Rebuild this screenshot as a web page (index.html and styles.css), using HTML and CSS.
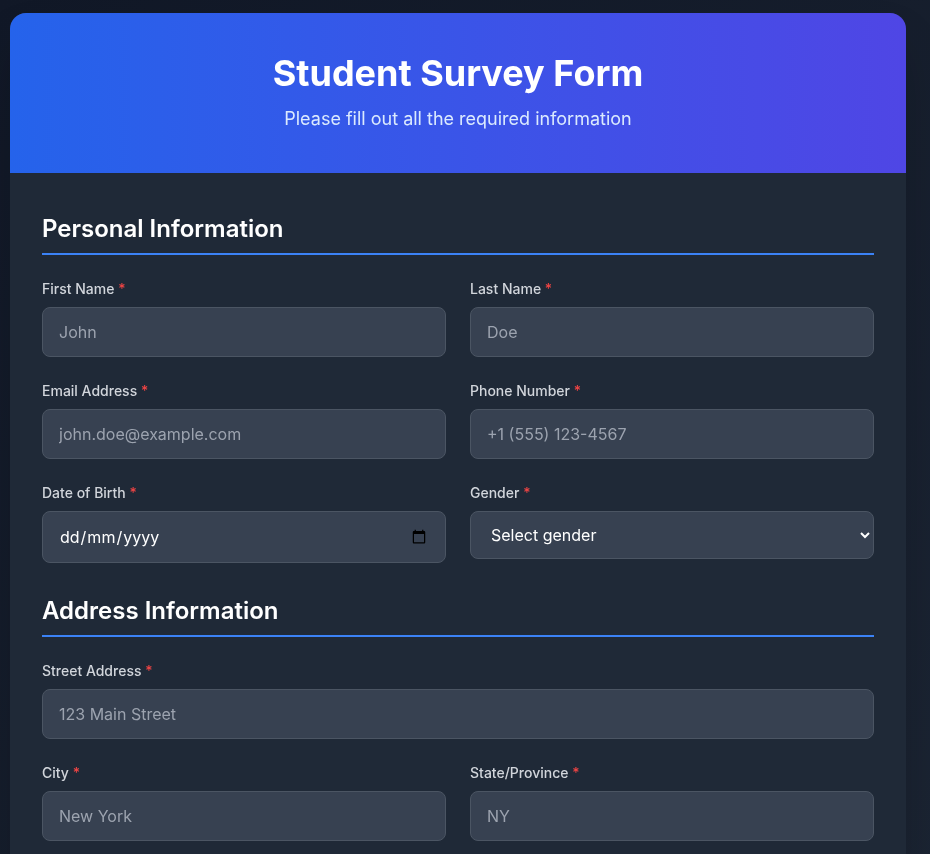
FILE: index.html
```html
<!DOCTYPE html>
<html lang="en-GB">
<head>
    <meta charset="UTF-8">
    <meta name="viewport" content="width=device-width, initial-scale=1.0">
    <title>Student Survey Form</title>
    <link rel="stylesheet" href="styles.css">
</head>
<body>
    <div class="container">
        <header class="form-header">
            <h1>Student Survey Form</h1>
            <p>Please fill out all the required information</p>
        </header>

        <form class="form-body">
            <section class="form-section">
                <h2>Personal Information</h2>
                <div class="form-grid">
                    <div class="form-group">
                        <label for="firstName">First Name <span class="required">*</span></label>
                        <input type="text" id="firstName" placeholder="John">
                    </div>
                    <div class="form-group">
                        <label for="lastName">Last Name <span class="required">*</span></label>
                        <input type="text" id="lastName" placeholder="Doe">
                    </div>
                    <div class="form-group">
                        <label for="email">Email Address <span class="required">*</span></label>
                        <input type="email" id="email" placeholder="john.doe@example.com">
                    </div>
                    <div class="form-group">
                        <label for="phone">Phone Number <span class="required">*</span></label>
                        <input type="tel" id="phone" placeholder="+1 (555) 123-4567">
                    </div>
                    <div class="form-group">
                        <label for="dob">Date of Birth <span class="required">*</span></label>
                        <div class="date-field">
                            <input type="date" id="dob">
                            <span class="date-mask"><span class="date-part">dd</span>/<span class="date-part">mm</span>/<span class="date-part">yyyy</span></span>
                        </div>
                    </div>
                    <div class="form-group">
                        <label for="gender">Gender <span class="required">*</span></label>
                        <select id="gender">
                            <option value="">Select gender</option>
                            <option>Male</option>
                            <option>Female</option>
                            <option>Other</option>
                        </select>
                    </div>
                </div>
            </section>

            <section class="form-section">
                <h2>Address Information</h2>
                <div class="form-grid">
                    <div class="form-group full-width">
                        <label for="street">Street Address <span class="required">*</span></label>
                        <input type="text" id="street" placeholder="123 Main Street">
                    </div>
                    <div class="form-group">
                        <label for="city">City <span class="required">*</span></label>
                        <input type="text" id="city" placeholder="New York">
                    </div>
                    <div class="form-group">
                        <label for="state">State/Province <span class="required">*</span></label>
                        <input type="text" id="state" placeholder="NY">
                    </div>
                </div>
            </section>
        </form>
    </div>
</body>
</html>
```

FILE: styles.css
```css
* {
    margin: 0;
    padding: 0;
    box-sizing: border-box;
}

body {
    background: linear-gradient(135deg, #111827, #1f2937);
    color: #fff;
    font-family: Inter, sans-serif;
    line-height: 1.5;
    min-height: 1700px;
    padding: 13px 24px 0 10px;
}

.container {
    background: #1f2937;
    border-radius: 16px 16px 0 0;
    box-shadow: 0 25px 50px -12px rgba(0, 0, 0, 0.25);
    overflow: hidden;
    will-change: transform;
}

.form-header {
    background: linear-gradient(90deg, #2563eb, #4f46e5);
    padding: 40px 32px;
    text-align: center;
}

.form-header h1 {
    font-size: 36px;
    font-weight: 700;
    line-height: 40px;
    margin-bottom: 12px;
}

.form-header p {
    font-size: 18px;
    line-height: 28px;
    color: #dbeafe;
}

.form-body {
    padding: 40px 32px;
}

.form-section {
    margin-bottom: 32px;
}

.form-section h2 {
    font-size: 24px;
    font-weight: 600;
    line-height: 32px;
    padding-bottom: 8px;
    margin-bottom: 24px;
    border-bottom: 2px solid #3b82f6;
}

.form-grid {
    display: grid;
    grid-template-columns: 1fr 1fr;
    gap: 24px;
}

.full-width {
    grid-column: 1 / -1;
}

label {
    display: block;
    font-size: 14px;
    font-weight: 500;
    line-height: 20px;
    color: #d1d5db;
    margin-bottom: 8px;
}

.required {
    color: #ef4444;
}

input,
select {
    width: 100%;
    padding: 12px 16px;
    background: #374151;
    border: 1px solid #4b5563;
    border-radius: 8px;
    color: #fff;
    font-family: inherit;
    font-size: 16px;
    line-height: inherit;
}

input::placeholder {
    color: #9ca3af;
}

/* the browser here prints mm/dd/yyyy, the mask shows the day-first format */
.date-field {
    position: relative;
}

.date-field input::-webkit-datetime-edit {
    visibility: hidden;
}

.date-mask {
    position: absolute;
    top: 0;
    left: 17px;
    line-height: 52px;
    pointer-events: none;
}

.date-part {
    padding: 0 1px;
}
```
